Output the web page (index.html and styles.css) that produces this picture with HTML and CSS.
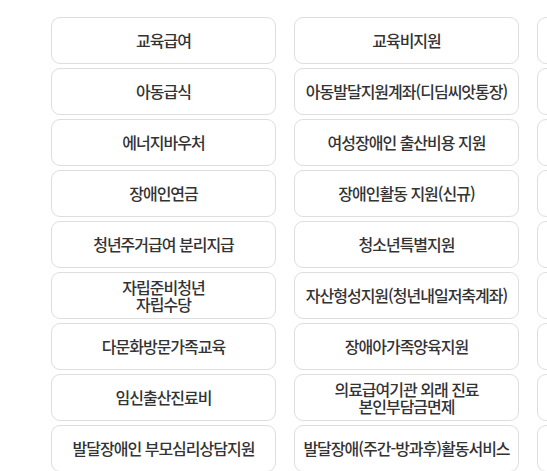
FILE: index.html
```html
<!DOCTYPE html>
<html lang="ko">
<head>
  <meta charset="UTF-8">
  <title>복지서비스 목록</title>
  <link rel="stylesheet" href="styles.css">
</head>
<body>

<div class="service-list">
  <button class="service">교육급여</button>
  <button class="service">교육비지원</button>
  <button class="service"></button>

  <button class="service">아동급식</button>
  <button class="service">아동발달지원계좌(디딤씨앗통장)</button>
  <button class="service"></button>

  <button class="service">에너지바우처</button>
  <button class="service">여성장애인 출산비용 지원</button>
  <button class="service"></button>

  <button class="service">장애인연금</button>
  <button class="service">장애인활동 지원(신규)</button>
  <button class="service"></button>

  <button class="service">청년주거급여 분리지급</button>
  <button class="service">청소년특별지원</button>
  <button class="service"></button>

  <button class="service">자립준비청년<br>자립수당</button>
  <button class="service">자산형성지원(청년내일저축계좌)</button>
  <button class="service"></button>

  <button class="service">다문화방문가족교육</button>
  <button class="service">장애아가족양육지원</button>
  <button class="service"></button>

  <button class="service">임신출산진료비</button>
  <button class="service">의료급여기관 외래 진료<br>본인부담금면제</button>
  <button class="service"></button>

  <button class="service">발달장애인 부모심리상담지원</button>
  <button class="service">발달장애(주간-방과후)활동서비스</button>
  <button class="service"></button>
</div>

</body>
</html>
```

FILE: styles.css
```css
html {
  overflow: hidden;
}

body {
  margin: 0;
  background: #fff;
  font-family: "Noto Sans CJK KR", "Noto Sans", sans-serif;
  color: #333;
}

.service-list {
  display: grid;
  grid-template-columns: repeat(3, 225px);
  grid-auto-rows: 47px;
  column-gap: 18px;
  row-gap: 4px;
  padding: 17px 0 0 51px;
  width: max-content;
}

.service {
  display: flex;
  align-items: center;
  justify-content: center;
  background: #fff;
  border: 1px solid #dedede;
  border-radius: 9px;
  padding: 0 4px;
  font-family: inherit;
  font-size: 16px;
  font-weight: 500;
  letter-spacing: -1px;
  line-height: 17px;
  color: #333;
  text-align: center;
  cursor: pointer;
}

.service:hover {
  background: #f7f7f7;
}
```
